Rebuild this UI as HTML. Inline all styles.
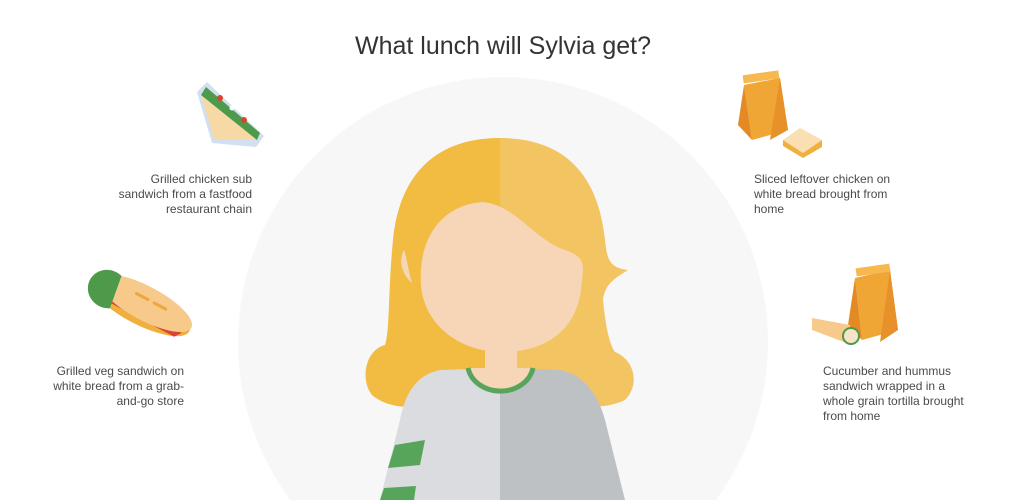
<!DOCTYPE html>
<html><head><meta charset="utf-8"><style>
html,body{margin:0;padding:0;background:#fff;width:1024px;height:500px;overflow:hidden}
svg{display:block}
text{font-family:"Liberation Sans",sans-serif;fill:#4a4a4a}
.c{font-size:12px}
</style></head><body>
<svg width="1024" height="500" viewBox="0 0 1024 500">
<circle cx="503" cy="342" r="265" fill="#f7f7f7"/>
<text x="503" y="54" text-anchor="middle" style="font-size:25px;fill:#333">What lunch will Sylvia get?</text>

<!-- girl hair -->
<path d="M500 138 C440 138 400 170 393 240 C388 290 390 330 385 345 C365 350 360 380 372 395 C390 410 420 410 440 400 L500 400 Z" fill="#f2bb42"/>
<path d="M500 138 C560 138 598 170 605 240 C607 260 610 268 628 270 C612 280 605 285 603 300 C606 330 610 345 615 352 C635 360 640 385 625 400 C600 412 570 405 560 400 L500 400 Z" fill="#f3c462"/>
<!-- body -->
<path d="M500 368 L440 370 C415 375 405 395 400 420 L380 500 L500 500 Z" fill="#dadcdf"/>
<path d="M500 368 L560 370 C585 375 598 395 605 420 L625 500 L500 500 Z" fill="#bdc1c4"/>
<path d="M395 445 L425 440 L420 465 L388 468 Z" fill="#57a55a"/>
<path d="M384 488 L416 486 L414 500 L380 500 Z" fill="#57a55a"/>
<!-- neck -->
<rect x="485" y="335" width="32" height="40" fill="#f7d6b7"/>
<path d="M468 368 A33 28 0 0 0 533 368" fill="#f7d6b7" stroke="#57a55a" stroke-width="5"/>
<!-- face -->
<path d="M421 285 C418 240 440 205 483 202 C515 205 535 240 565 250 C590 258 582 270 581 290 C575 335 540 352 502 352 C460 352 424 325 421 285 Z" fill="#f7d6b7"/>
<path d="M404 250 C398 260 402 275 412 283 C408 270 407 258 404 250 Z" fill="#f7d6b7"/>

<!-- triangle sandwich -->
<path d="M197 92 L207 82 L264 136 L256 147 L212 143 Z" fill="#c9d9ef" opacity=".85"/>
<path d="M201 95 L257 140 L214 139 Z" fill="#f6d9a4"/>
<path d="M201 95 L206 87 L260 133 L257 140 Z" fill="#4c9a4a"/>
<circle cx="220" cy="98" r="3" fill="#d9442f"/><circle cx="244" cy="120" r="3" fill="#d9442f"/>
<circle cx="232" cy="108" r="2.5" fill="#fff"/>
<!-- sub sandwich -->
<g transform="translate(140,305) rotate(28)">
<ellipse cx="0" cy="0" rx="56" ry="19" fill="#f0b03e"/>
<path d="M-50 5 L50 5 L45 12 L-45 12 Z" fill="#d9442f"/>
<ellipse cx="4" cy="-4" rx="52" ry="17" fill="#f7c98a"/>
<path d="M-56 0 A20 19 0 0 1 -30 -17 L-25 17 A20 19 0 0 1 -56 0 Z" fill="#4c9a4a"/>
<rect x="-10" y="-10" width="16" height="3" rx="1.5" fill="#eea73a"/>
<rect x="10" y="-10" width="16" height="3" rx="1.5" fill="#eea73a"/>
</g>

<!-- bag 1 -->
<path d="M744 85 L780 78 L788 130 L752 140 Z" fill="#f0a635"/>
<path d="M744 85 L738 125 L752 140 Z" fill="#e38a25"/>
<path d="M780 78 L788 130 L770 140 Z" fill="#e6912a"/>
<rect x="743" y="73" width="36" height="8" fill="#f6b84f" transform="rotate(-8 760 77)"/>
<path d="M783 140 L800 128 L822 140 L803 153 Z" fill="#f9dfb1"/>
<path d="M783 140 L803 153 L822 140 L822 147 L803 158 L783 146 Z" fill="#f0b03e"/>
<!-- bag 2 -->
<path d="M855 278 L890 270 L898 330 L862 340 Z" fill="#f0a635"/>
<path d="M855 278 L848 325 L862 340 Z" fill="#e38a25"/>
<path d="M890 270 L898 330 L880 342 Z" fill="#e6912a"/>
<rect x="856" y="266" width="34" height="8" fill="#f6b84f" transform="rotate(-8 873 270)"/>
<path d="M812 318 L850 325 L852 345 L812 330 Z" fill="#f7c98a"/>
<circle cx="851" cy="336" r="9" fill="#4c9a4a"/><circle cx="851" cy="336" r="7" fill="#f7e3c8"/>

<g class="c" text-anchor="end">
<text x="252" y="183">Grilled chicken sub</text>
<text x="252" y="198">sandwich from a fastfood</text>
<text x="252" y="213">restaurant chain</text>
<text x="184" y="375">Grilled veg sandwich on</text>
<text x="184" y="390">white bread from a grab-</text>
<text x="184" y="405">and-go store</text>
</g>
<g class="c">
<text x="754" y="183">Sliced leftover chicken on</text>
<text x="754" y="198">white bread brought from</text>
<text x="754" y="213">home</text>
<text x="823" y="375">Cucumber and hummus</text>
<text x="823" y="390">sandwich wrapped in a</text>
<text x="823" y="405">whole grain tortilla brought</text>
<text x="823" y="420">from home</text>
</g>
</svg>
</body></html>
